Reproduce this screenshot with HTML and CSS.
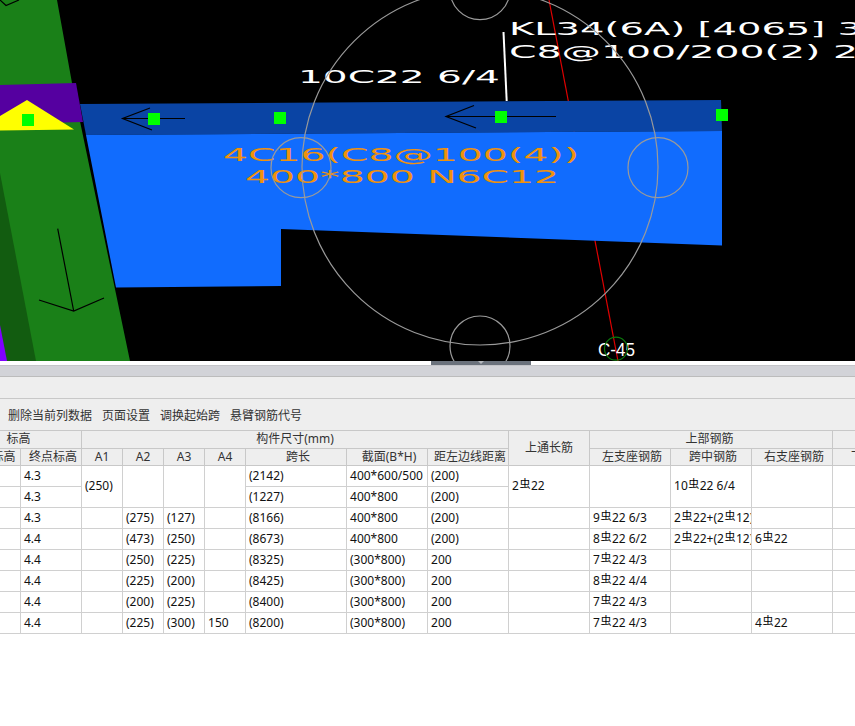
FILE: index.html
```html
<!DOCTYPE html>
<html lang="zh-CN">

<head>
    <meta charset="UTF-8">
    <title>梁平法表格</title>
    <link rel="stylesheet" href="styles.css">
</head>

<body>
    <svg class="canvas" width="855" height="361" viewBox="0 0 855 361">
        <!-- 轴线 -->
        <line class="red" x1="549" y1="0" x2="618" y2="361" />

        <!-- 梁 -->
        <polygon class="beam-top" points="80,104 721,100 722,131 86,135" />
        <polygon class="beam" points="86,135 722,131 722,245.5 281,229 281,286 116,287.5" />

        <!-- 柱 -->
        <polygon class="col" points="0,0 57,0 72,83 130,361 0,361" />
        <polygon class="col-dark" points="0,173 36,361 0,361" />
        <polygon class="col-purple" points="0,325 7,361 0,361" />
        <polygon class="purple" points="0,85 76,83 83,122 0,124" />
        <polygon class="yellow" points="27,100 74,129.5 0,130.5 0,116" />

        <!-- 箭头 -->
        <path class="arrow" d="M0 0L6 5.5L19 0" />
        <path class="arrow" d="M185 118.5H122.5M150 108L122.5 118.5L152 130" />
        <path class="arrow" d="M556 116.5H446M474 105.5L446 116.5L476 128" />
        <path class="arrow" d="M57.7 228.7L73.7 311M39 300L73.7 311L104 298" />

        <line class="leader" x1="503.5" y1="32" x2="506.7" y2="101" />

        <!-- 夹点 -->
        <rect class="grip" x="22" y="114" width="12" height="12" />
        <rect class="grip" x="148" y="113" width="12" height="12" />
        <rect class="grip" x="274" y="112" width="12" height="12" />
        <rect class="grip" x="495" y="111" width="12" height="12" />
        <rect class="grip" x="716" y="109" width="12" height="12" />

        <!-- 标注 -->
        <text class="label orange" x="223" y="160.5" textLength="356" lengthAdjust="spacingAndGlyphs">4C16(C8@100(4))</text>
        <text class="label orange" x="245" y="182.5" textLength="314" lengthAdjust="spacingAndGlyphs">400*800 N6C12</text>
        <text class="label white" x="298" y="83" textLength="202" lengthAdjust="spacingAndGlyphs">10C22 6/4</text>
        <text class="label white" x="509" y="35" textLength="353" lengthAdjust="spacingAndGlyphs">KL34(6A) [4065] 3</text>
        <text class="label white" x="509" y="58" textLength="349" lengthAdjust="spacingAndGlyphs">C8@100/200(2) 2</text>

        <!-- 选择圆 -->
        <circle class="ring" cx="480" cy="167" r="178" />
        <circle class="ring" cx="301" cy="167.7" r="30" />
        <circle class="ring" cx="658" cy="167.7" r="30" />
        <circle class="ring" cx="480" cy="-10.3" r="30" />
        <circle class="ring" cx="480" cy="346" r="30" />

        <text class="axis-text" x="598" y="356" textLength="37" lengthAdjust="spacingAndGlyphs">C-45</text>
        <circle class="axis-ring" cx="616" cy="348.7" r="11.5" />
    </svg>

    <div class="splitter">
        <div class="handle"><span class="handle-tri"></span></div>
    </div>

    <div class="band"></div>
    <div class="band2"></div>

    <nav class="toolbar">
        <span>删除当前列数据</span>
        <span>页面设置</span>
        <span>调换起始跨</span>
        <span>悬臂钢筋代号</span>
    </nav>

    <div class="grid-wrap">
        <table class="grid">
            <colgroup>
                <col class="w62">
                <col class="w61">
                <col class="w41">
                <col class="w41">
                <col class="w41">
                <col class="w41">
                <col class="w101">
                <col class="w81">
                <col class="w81">
                <col class="w81">
                <col class="w81">
                <col class="w81">
                <col class="w81">
                <col class="w81">
                <col class="w81">
                <col class="w81">
            </colgroup>
            <thead>
                <tr class="h1">
                    <th class="nudge" colspan="2">标高</th>
                    <th colspan="7">构件尺寸(mm)</th>
                    <th rowspan="2">上通长筋</th>
                    <th class="nudge" colspan="3">上部钢筋</th>
                    <th colspan="3">下部钢筋</th>
                </tr>
                <tr class="h2">
                    <th>起点标高</th>
                    <th>终点标高</th>
                    <th class="an">A1</th>
                    <th class="an">A2</th>
                    <th class="an">A3</th>
                    <th class="an">A4</th>
                    <th>跨长</th>
                    <th>截面(B*H)</th>
                    <th>距左边线距离</th>
                    <th>左支座钢筋</th>
                    <th>跨中钢筋</th>
                    <th>右支座钢筋</th>
                    <th>下通长筋</th>
                    <th></th>
                    <th></th>
                </tr>
            </thead>
            <tbody>
                <tr>
                    <td></td><td>4.3</td>
                    <td rowspan="2">(250)</td><td rowspan="2"></td><td rowspan="2"></td><td rowspan="2"></td>
                    <td>(2142)</td><td>400*600/500</td><td>(200)</td>
                    <td rowspan="2">2<i>虫</i>22</td>
                    <td rowspan="2"></td><td rowspan="2">10<i>虫</i>22 6/4</td><td rowspan="2"></td>
                    <td rowspan="2"></td><td rowspan="2"></td><td rowspan="2"></td>
                </tr>
                <tr>
                    <td></td><td>4.3</td>
                    <td>(1227)</td><td>400*800</td><td>(200)</td>
                </tr>
                <tr>
                    <td></td><td>4.3</td><td></td><td>(275)</td><td>(127)</td><td></td>
                    <td>(8166)</td><td>400*800</td><td>(200)</td><td></td>
                    <td>9<i>虫</i>22 6/3</td><td>2<i>虫</i>22+(2<i>虫</i>12)</td><td></td>
                    <td></td><td></td><td></td>
                </tr>
                <tr>
                    <td></td><td>4.4</td><td></td><td>(473)</td><td>(250)</td><td></td>
                    <td>(8673)</td><td>400*800</td><td>(200)</td><td></td>
                    <td>8<i>虫</i>22 6/2</td><td>2<i>虫</i>22+(2<i>虫</i>12)</td><td>6<i>虫</i>22</td>
                    <td></td><td></td><td></td>
                </tr>
                <tr>
                    <td></td><td>4.4</td><td></td><td>(250)</td><td>(225)</td><td></td>
                    <td>(8325)</td><td>(300*800)</td><td>200</td><td></td>
                    <td>7<i>虫</i>22 4/3</td><td></td><td></td>
                    <td></td><td></td><td></td>
                </tr>
                <tr>
                    <td></td><td>4.4</td><td></td><td>(225)</td><td>(200)</td><td></td>
                    <td>(8425)</td><td>(300*800)</td><td>200</td><td></td>
                    <td>8<i>虫</i>22 4/4</td><td></td><td></td>
                    <td></td><td></td><td></td>
                </tr>
                <tr>
                    <td></td><td>4.4</td><td></td><td>(200)</td><td>(225)</td><td></td>
                    <td>(8400)</td><td>(300*800)</td><td>200</td><td></td>
                    <td>7<i>虫</i>22 4/3</td><td></td><td></td>
                    <td></td><td></td><td></td>
                </tr>
                <tr>
                    <td></td><td>4.4</td><td></td><td>(225)</td><td>(300)</td><td>150</td>
                    <td>(8200)</td><td>(300*800)</td><td>200</td><td></td>
                    <td>7<i>虫</i>22 4/3</td><td></td><td>4<i>虫</i>22</td>
                    <td></td><td></td><td></td>
                </tr>
            </tbody>
        </table>
    </div>
</body>

</html>
```

FILE: styles.css
```css
html,
body {
    margin: 0;
    height: 100%;
    overflow: hidden;
    background: #fff;
}

body {
    font-family: "Noto Sans", "Noto Sans CJK SC", sans-serif;
    font-size: 12px;
    color: #222;
}

/* 图形区 */
.canvas {
    display: block;
    background: #000;
}

.beam { fill: #116cfe; }
.beam-top { fill: #0a44a4; }
.col { fill: #1a8018; }
.col-dark { fill: #125c10; }
.col-purple { fill: #8000ff; }
.purple { fill: #5500a0; }
.yellow { fill: #ffff00; }
.grip { fill: #00ff00; }

.red {
    stroke: #e00000;
    stroke-width: 1.2;
}

.arrow {
    fill: none;
    stroke: #000;
    stroke-width: 1.2;
}

.leader {
    stroke: #fff;
    stroke-width: 2;
}

.ring {
    fill: none;
    stroke: #9a9a9a;
    stroke-width: 1.2;
}

.axis-ring {
    fill: none;
    stroke: #0b7a0b;
    stroke-width: 1.2;
}

.label {
    font-family: "DejaVu Sans", sans-serif;
    font-size: 18px;
}

.orange { fill: #f0920c; }
.white { fill: #fff; }

.axis-text {
    font-family: "Liberation Sans", sans-serif;
    font-size: 19px;
    fill: #fff;
}

/* 分隔条 */
.splitter {
    height: 4px;
    padding-left: 431px;
}

.handle {
    width: 100px;
    height: 4px;
    background: #6b727c;
    display: flex;
    justify-content: center;
}

.handle-tri {
    width: 0;
    height: 0;
    border-left: 3px solid transparent;
    border-right: 3px solid transparent;
    border-top: 3px solid #b5b8bd;
}

.band {
    height: 10px;
    background: #d2d3d8;
    border-top: 1px solid #c4c5c9;
    border-bottom: 1px solid #bcbcbc;
}

.band2 {
    height: 21px;
    background: #eee;
    border-bottom: 1px solid #c8c8c8;
}

.toolbar {
    height: 31px;
    background: #eee;
    border-bottom: 1px solid #c8c8c8;
    display: flex;
    align-items: center;
    gap: 10px;
    padding-left: 8px;
    color: #333;
}

/* 表格 */
.grid-wrap {
    overflow: hidden;
}

.grid {
    table-layout: fixed;
    border-collapse: collapse;
    margin-left: -42px;
    width: 1117px;
}

.w41 { width: 41px; }
.w61 { width: 61px; }
.w62 { width: 62px; }
.w81 { width: 81px; }
.w101 { width: 101px; }

.grid th,
.grid td {
    border: 1px solid #d0d0d0;
    padding: 0 0 0 3px;
    overflow: hidden;
    white-space: nowrap;
    line-height: 16px;
}

.grid th {
    background: #eee;
    font-weight: normal;
    color: #333;
    text-align: center;
    padding: 0;
    border-color: #c8c8c8;
}

.grid tr { height: 21px; }
.grid .h1 { height: 17px; }
.grid .h2 { height: 17px; }

.grid thead tr:first-child th {
    border-top: none;
}

.grid .h1 .nudge { padding-right: 3px; }
.grid .h2 th { padding-left: 4px; }
.grid .h2 .an { padding-left: 0; }

.grid td {
    color: #111;
}

.grid i {
    font-style: normal;
    font-size: 11px;
    line-height: 0;
    vertical-align: 2px;
    margin: 0 0.5px;
    color: #000;
}
```
